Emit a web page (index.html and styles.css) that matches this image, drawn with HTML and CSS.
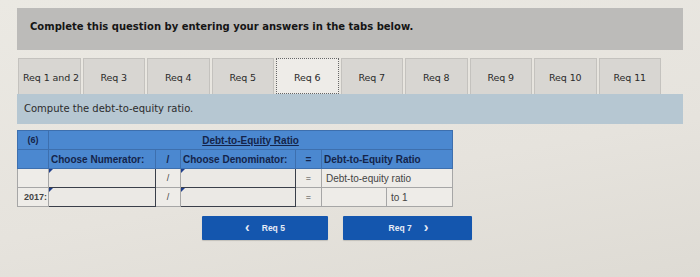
FILE: index.html
```html
<!DOCTYPE html>
<html>
<head>
<meta charset="utf-8">
<link rel="stylesheet" href="styles.css">
</head>
<body>
<div class="page">
  <div class="header">Complete this question by entering your answers in the tabs below.</div>
  <div class="tabs">
    <div class="tab">Req 1 and 2</div>
    <div class="tab">Req 3</div>
    <div class="tab">Req 4</div>
    <div class="tab">Req 5</div>
    <div class="tab active">Req 6</div>
    <div class="tab">Req 7</div>
    <div class="tab">Req 8</div>
    <div class="tab">Req 9</div>
    <div class="tab">Req 10</div>
    <div class="tab">Req 11</div>
  </div>
  <div class="instr">Compute the debt-to-equity ratio.</div>
  <table class="ratio">
    <colgroup>
      <col class="c1"><col class="c2"><col class="c3"><col class="c4"><col class="c5"><col class="c6a"><col class="c6b">
    </colgroup>
    <tr class="h1">
      <th class="lbl">(6)</th>
      <th colspan="6" class="title"><u>Debt-to-Equity Ratio</u></th>
    </tr>
    <tr class="h2">
      <th></th>
      <th class="left">Choose Numerator:</th>
      <th>/</th>
      <th class="left">Choose Denominator:</th>
      <th>=</th>
      <th colspan="2" class="left">Debt-to-Equity Ratio</th>
    </tr>
    <tr class="row">
      <td></td>
      <td class="inp"><span class="mark"></span></td>
      <td class="op">/</td>
      <td class="inp"><span class="mark"></span></td>
      <td class="op">=</td>
      <td colspan="2" class="txt">Debt-to-equity ratio</td>
    </tr>
    <tr class="row">
      <td class="yr">2017:</td>
      <td class="inp"><span class="mark"></span></td>
      <td class="op">/</td>
      <td class="inp"><span class="mark"></span></td>
      <td class="op">=</td>
      <td></td>
      <td class="txt">to 1</td>
    </tr>
  </table>
  <div class="nav">
    <div class="btn prev"><span class="chev">&lsaquo;</span>Req 5</div>
    <div class="btn next">Req 7<span class="chev">&rsaquo;</span></div>
  </div>
</div>
</body>
</html>
```
FILE: styles.css
```css
html, body { margin: 0; padding: 0; }
body {
  width: 700px;
  height: 277px;
  overflow: hidden;
  background: linear-gradient(170deg, #ebe9e3 0%, #e6e3dd 60%, #dedbd4 100%);
  font-family: "DejaVu Sans", Verdana, sans-serif;
}
.page {
  margin-left: 17px;
  padding-top: 8px;
  width: 666px;
}
.header {
  height: 42px;
  background: #bcbbb9;
  box-sizing: border-box;
  padding: 13px 0 0 13px;
  font-weight: bold;
  font-size: 10px;
  color: #151515;
}
.tabs {
  display: flex;
  margin-top: 8px;
  height: 36px;
  gap: 2px;
  padding-left: 1px;
}
.tab {
  width: 62.5px;
  box-sizing: border-box;
  background: #d8d6d2;
  border: 1px solid #c4c2be;
  border-bottom: none;
  font-size: 9.5px;
  color: #2a2a2a;
  display: flex;
  align-items: center;
  justify-content: center;
  padding-top: 2px;
  letter-spacing: -0.1px;
}
.tab:first-child { justify-content: flex-start; padding-left: 4px; }
.tab.active {
  background: #eeece8;
  border: 1px dotted #666;
}
.instr {
  height: 30px;
  background: #b6c7d2;
  box-sizing: border-box;
  padding: 9px 0 0 7px;
  font-size: 10px;
  color: #2c2c2c;
}
.ratio {
  margin-top: 6px;
  border-collapse: collapse;
  width: 435px;
  font-family: "Liberation Sans", Arial, sans-serif;
  font-size: 10px;
  table-layout: fixed;
}
.c1 { width: 31px; }
.c2 { width: 107px; }
.c3 { width: 25px; }
.c4 { width: 115px; }
.c5 { width: 26px; }
.c6a { width: 65px; }
.c6b { width: 66px; }
.ratio th, .ratio td {
  border: 1px solid #8d9aa8;
  padding: 0 2px;
  height: 19px;
  box-sizing: border-box;
  white-space: nowrap;
  overflow: hidden;
}
.h1 th, .h2 th {
  background: #4b88d0;
  color: #14244a;
  font-weight: bold;
  font-size: 10px;
  border-color: #3d6fae;
}
.h1 .title { text-align: center; }
.h1 .lbl { text-align: center; font-size: 9px; }
.h2 th { text-align: center; }
.h2 th.left { text-align: left; }
.row td {
  background: #eeece8;
  color: #444;
  border-color: #a6a6a6;
}
.ratio td.inp {
  position: relative;
  border: 1.5px solid #3a3f4a;
  background: #ebe9e5;
}
.mark {
  position: absolute;
  left: 0;
  top: 0;
  width: 0;
  height: 0;
  border-top: 4px solid #1e3e8c;
  border-right: 4px solid transparent;
}
.op { text-align: center; color: #555; font-size: 9px; }
.txt { color: #444; font-size: 10px; }
.ratio td.txt:last-child { padding-left: 4px; }
.yr { font-weight: bold; color: #333; text-align: right; font-size: 9px; padding: 0 1px !important; }
.nav {
  display: flex;
  gap: 15px;
  margin-top: 9px;
  margin-left: 185px;
}
.btn {
  height: 24px;
  background: #1456ae;
  border-radius: 1px;
  color: #e6ecf6;
  font-family: "Liberation Sans", Arial, sans-serif;
  font-weight: bold;
  font-size: 8.5px;
  display: flex;
  align-items: center;
  justify-content: center;
  box-shadow: 0 1px 1px rgba(0,0,0,0.15);
}
.prev { width: 126px; padding-right: 12px; box-sizing: border-box; }
.next { width: 129px; padding-left: 14px; box-sizing: border-box; }
.chev { font-size: 14px; line-height: 1; margin: 0 12px; position: relative; top: -1px; }
```
